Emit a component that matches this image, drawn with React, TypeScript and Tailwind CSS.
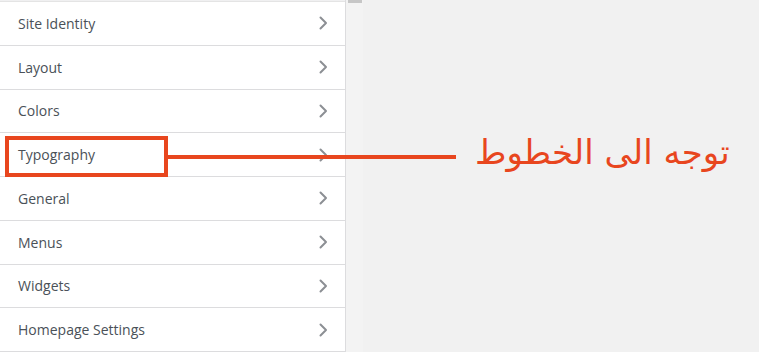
import React from 'react'

const SECTIONS = [
  'Site Identity',
  'Layout',
  'Colors',
  'Typography',
  'General',
  'Menus',
  'Widgets',
  'Homepage Settings',
]

function Chevron() {
  return (
    <svg width="10" height="16" viewBox="0 0 10 16" fill="none" stroke="#8c8f94" strokeWidth="2" strokeLinecap="round" strokeLinejoin="round">
      <path d="M2.5 2.5L8 8l-5.5 5.5" />
    </svg>
  )
}

export default function App() {
  return (
    <div className="relative flex w-[759px] h-[352px] overflow-hidden bg-[#f1f1f1]" style={{ fontFamily: '"Open Sans", "Liberation Sans", sans-serif' }}>
      {/* Customizer panel */}
      <div className="w-[346px] shrink-0 bg-white border-r border-[#dcdcde] flex flex-col">
        <div className="h-[2px] bg-[#f0f0f1] border-b border-[#e4e4e4]" />
        {SECTIONS.map(title => (
          <div key={title} className="h-[43.75px] shrink-0 flex items-center justify-between pl-[18px] pr-[17px] border-b border-[#dcdcde]">
            <span className="text-[14px] font-medium text-[#4a5158]">{title}</span>
            <Chevron />
          </div>
        ))}
      </div>

      {/* Scroll track */}
      <div className="w-[17px] shrink-0 bg-[#f3f3f3] flex flex-col items-center">
        <div className="w-[14px] h-[3px] bg-[#c6c6c6]" />
      </div>

      <div className="flex-1" />

      {/* Annotation */}
      <div className="absolute left-[5px] top-[136px] w-[163px] h-[41px] border-[4px] border-[#e8461e]" />
      <div className="absolute left-[167px] top-[155px] w-[289px] h-[4px] bg-[#e8461e]" />
      <div
        dir="rtl"
        className="absolute left-[475px] top-[128px] text-[34px] leading-[48px] text-[#e8461e] whitespace-nowrap"
        style={{ fontFamily: '"DejaVu Sans", sans-serif' }}
      >
        توجه الى الخطوط
      </div>
    </div>
  )
}
